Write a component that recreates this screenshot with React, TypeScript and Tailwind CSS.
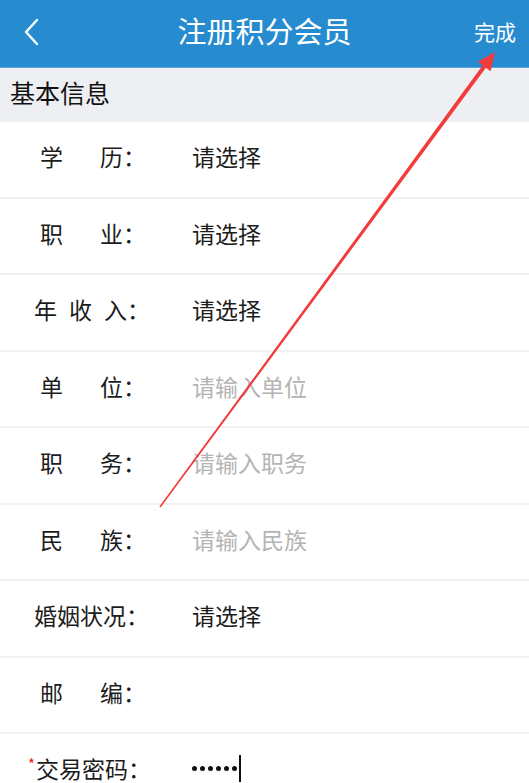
const font = { fontFamily: '"Noto Sans CJK SC", "Noto Sans", sans-serif' };

type Row = {
  chars: string[];
  pad: string;
  gap: string;
  value?: string;
  placeholder?: boolean;
  required?: boolean;
  password?: boolean;
};

const rows: Row[] = [
  { chars: ['学', '历'], pad: 'pl-[40px]', gap: 'gap-[37px]', value: '请选择' },
  { chars: ['职', '业'], pad: 'pl-[40px]', gap: 'gap-[37px]', value: '请选择' },
  { chars: ['年', '收', '入'], pad: 'pl-[34px]', gap: 'gap-[12px]', value: '请选择' },
  { chars: ['单', '位'], pad: 'pl-[40px]', gap: 'gap-[37px]', value: '请输入单位', placeholder: true },
  { chars: ['职', '务'], pad: 'pl-[40px]', gap: 'gap-[37px]', value: '请输入职务', placeholder: true },
  { chars: ['民', '族'], pad: 'pl-[40px]', gap: 'gap-[37px]', value: '请输入民族', placeholder: true },
  { chars: ['婚', '姻', '状', '况'], pad: 'pl-[34px]', gap: 'gap-0', value: '请选择' },
  { chars: ['邮', '编'], pad: 'pl-[40px]', gap: 'gap-[37px]' },
  { chars: ['交', '易', '密', '码'], pad: 'pl-[28px]', gap: 'gap-0', required: true, password: true },
];

function FormRow({ row }: { row: Row }) {
  return (
    <div className="flex h-[76.5px] items-center border-b-2 border-[#f1f1f1] bg-white pb-[6px] text-[23px] text-[#1c1c1c]">
      <div className={`flex w-[192px] flex-none items-center ${row.pad}`}>
        {row.required && <span className="mr-[1px] -mt-[8px] text-[15px] text-[#f02020]">*</span>}
        <div className={`flex ${row.gap}`}>
          {row.chars.map((c, i) => (
            <span key={i}>{c}</span>
          ))}
        </div>
        <span>：</span>
      </div>
      {row.password ? (
        <div className="flex items-center">
          <div className="flex gap-[3px]">
            {[0, 1, 2, 3, 4, 5].map((i) => (
              <span key={i} className="h-[5px] w-[5px] rounded-full bg-[#111]" />
            ))}
          </div>
          <span className="ml-[2px] h-[27px] w-[2px] bg-[#111]" />
        </div>
      ) : (
        row.value && (
          <span className={row.placeholder ? 'text-[#b4b4b4]' : 'text-[#1c1c1c]'}>{row.value}</span>
        )
      )}
    </div>
  );
}

export default function App() {
  return (
    <div className="relative h-[783px] w-[529px] overflow-hidden bg-white" style={font}>
      {/* Header */}
      <div className="flex h-[68px] items-center justify-between border-b border-[#5aa6dc] bg-[#268bcf] px-[13px] text-white">
        <svg width="20" height="30" viewBox="0 0 20 30" className="ml-[10px] -mt-[4px]">
          <polyline points="14,3 3,15 14,27" fill="none" stroke="white" strokeWidth="2.4" strokeLinecap="round" strokeLinejoin="round" />
        </svg>
        <span className="absolute left-1/2 top-[12px] -translate-x-1/2 text-[29px] leading-[36px]">注册积分会员</span>
        <span className="-mt-[4px] text-[21px]">完成</span>
      </div>

      {/* Section title */}
      <div className="flex h-[54px] items-center bg-[#eeeff3] pb-[4px] pl-[10px] text-[25px] text-[#111]">
        基本信息
      </div>

      {rows.map((r, i) => (
        <FormRow key={i} row={r} />
      ))}

      {/* Annotation arrow */}
      <svg className="pointer-events-none absolute left-0 top-0" width="529" height="783" viewBox="0 0 529 783">
        <polygon
          points="159.4,506.6 482.7,65.3 477.9,61.8 495,52 490.7,71.2 485.9,67.7 160.6,507.4"
          fill="#f23b3b"
        />
      </svg>
    </div>
  );
}
